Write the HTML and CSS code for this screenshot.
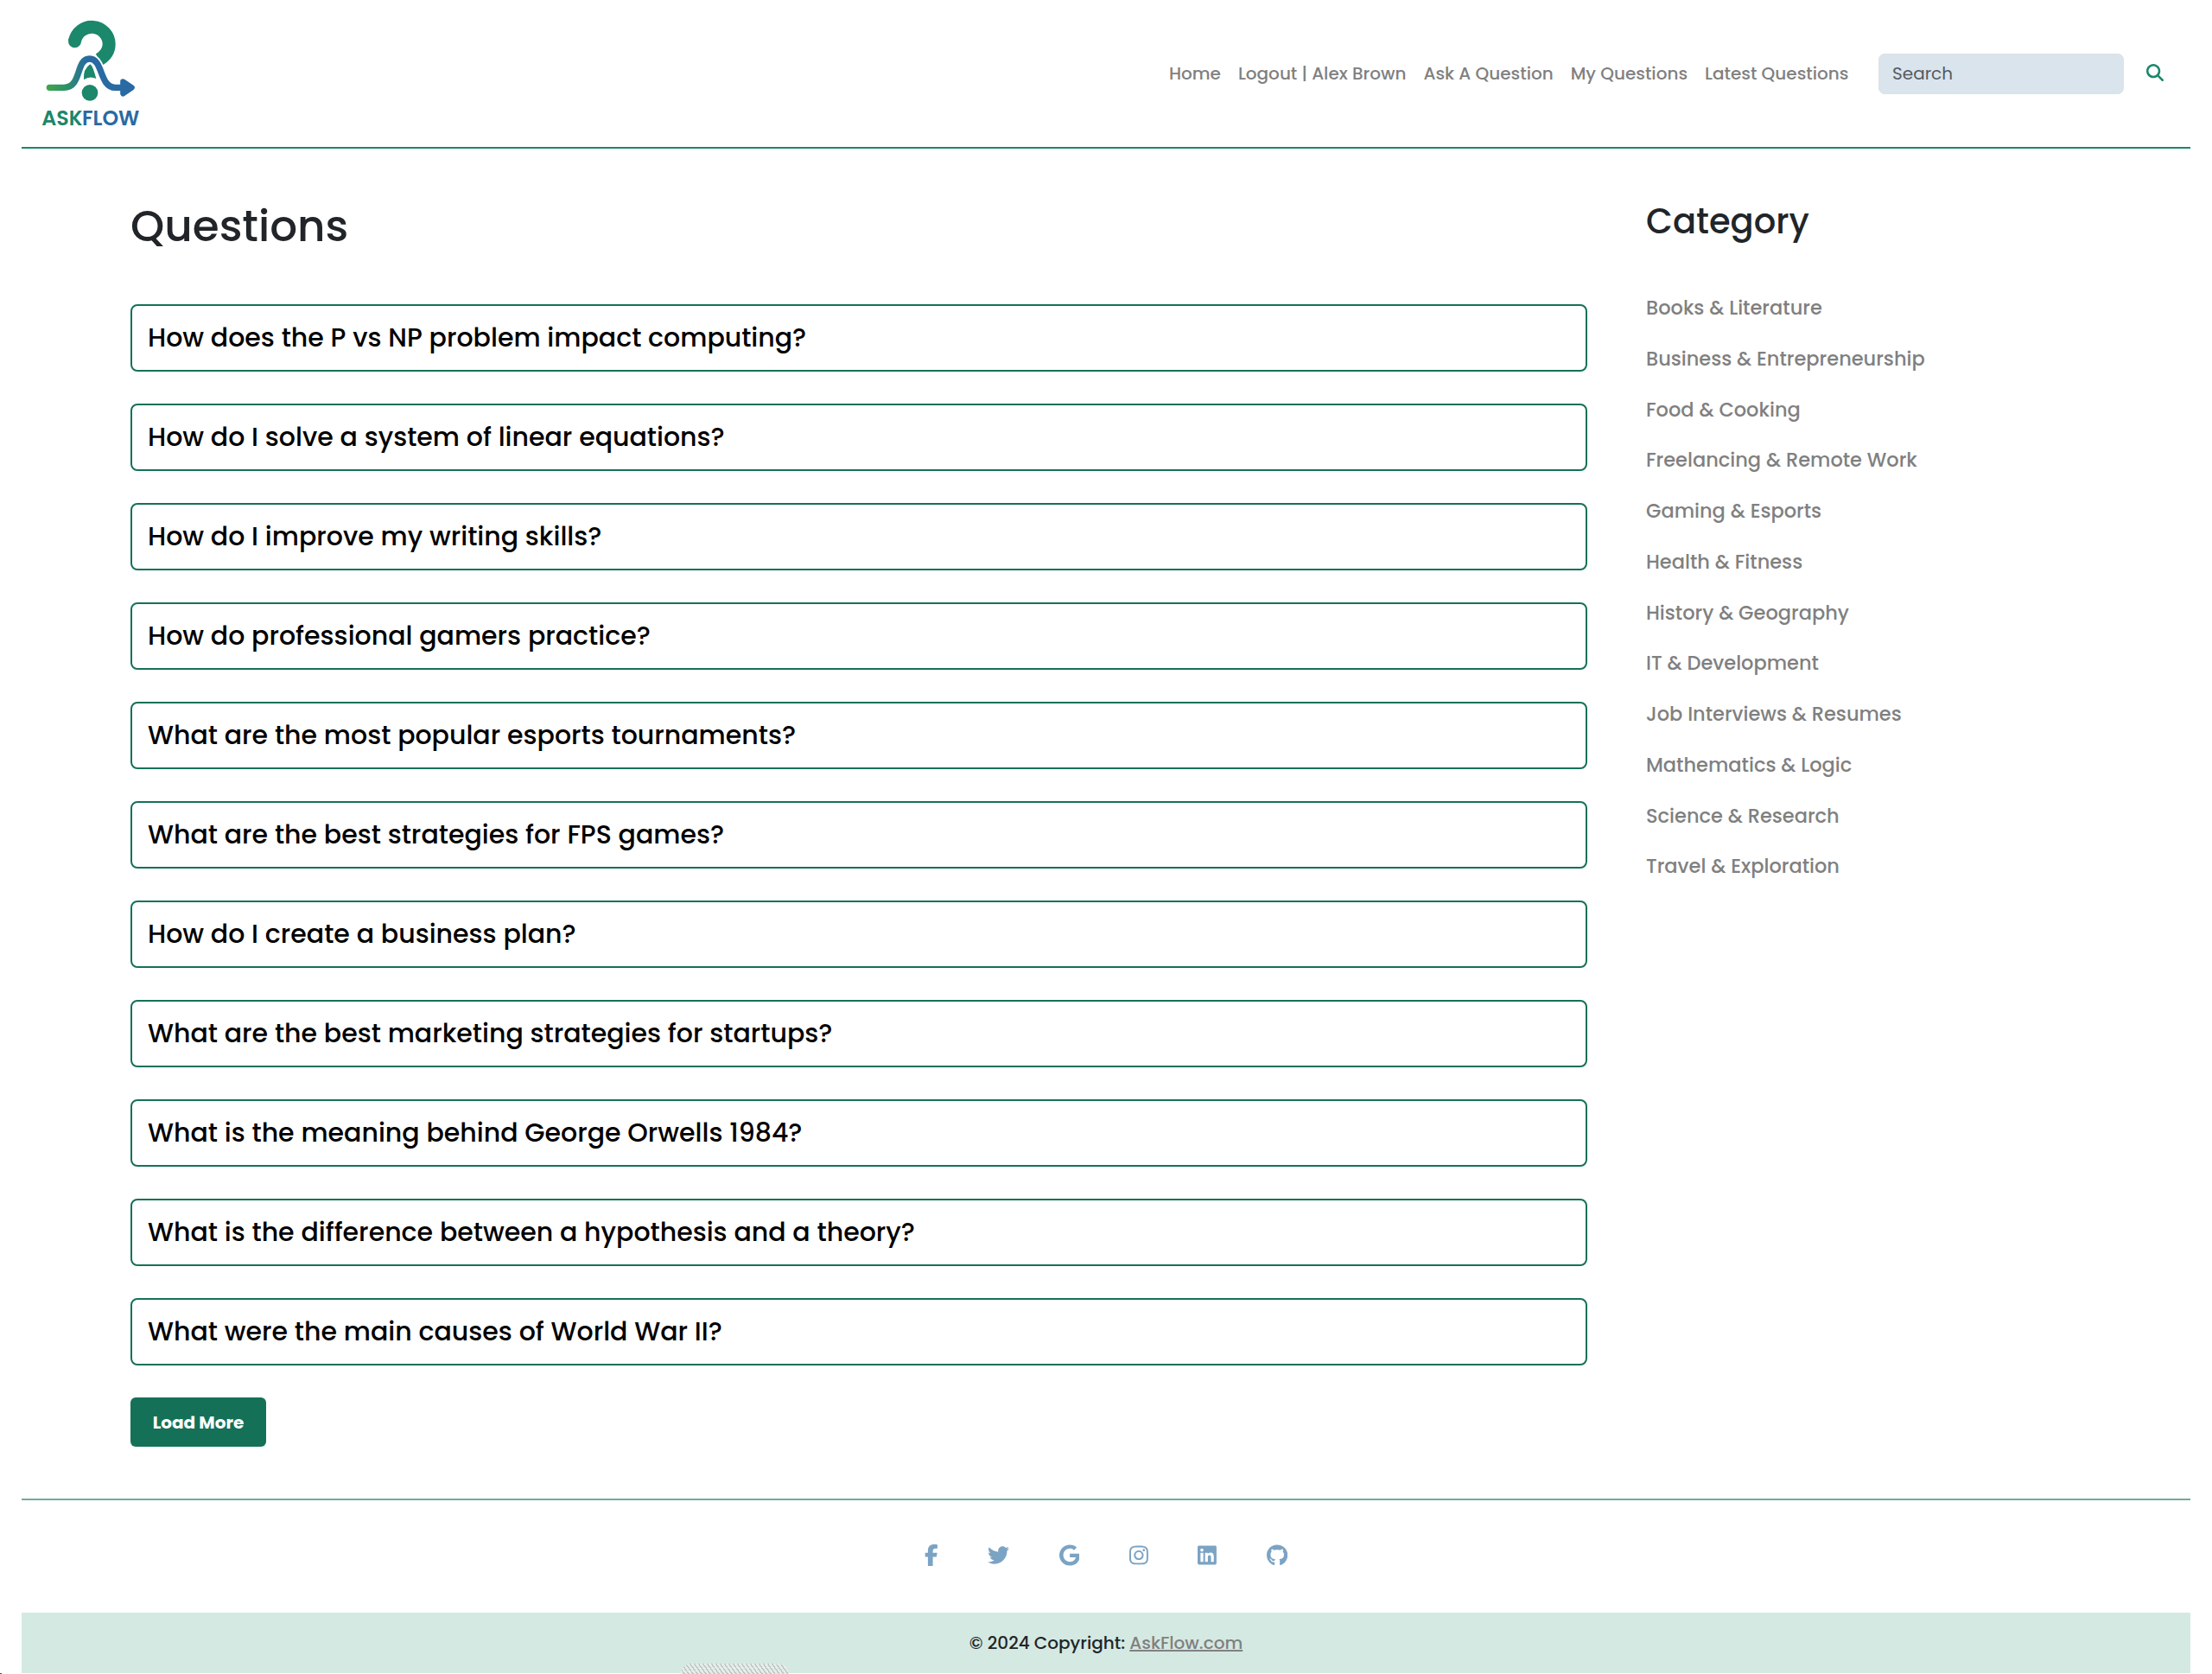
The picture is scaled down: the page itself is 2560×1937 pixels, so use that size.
FILE: index.html
```html
<!DOCTYPE html>
<html lang="en">
<head>
<meta charset="utf-8">
<title>AskFlow</title>
<link rel="stylesheet" href="styles.css">
</head>
<body>
<div class="page">
  <header class="header">
    <a class="logo" href="#" aria-label="AskFlow">
      <svg viewBox="120 45 390 420" width="130" height="140">
        <defs>
          <linearGradient id="flow" gradientUnits="userSpaceOnUse" x1="165" y1="0" x2="300" y2="0">
            <stop offset="0" stop-color="#3fa54d"/>
            <stop offset=".5" stop-color="#2c9068"/>
            <stop offset="1" stop-color="#2a6aa3"/>
          </linearGradient>
        </defs>
        <path d="M259.500 143A60 60 0 0 1 378.500 153C378.500 175 366 194 344 207" fill="none" stroke="#1b876b" stroke-width="45"/>
        <circle cx="259.500" cy="143" r="22.500" fill="#1b876b"/>
        <path d="M172 304H222C285 304 262 204 311 204C358 204 345 304 400 304H430" fill="none" stroke="#fff" stroke-width="33"/>
        <path d="M313 223C321 229 326 244 334 273Q313 262 291 276Q288 240 313 223Z" fill="#1b876b"/>
        <circle cx="312" cy="322" r="28" fill="#1b876b"/>
        <path d="M172 304H222C285 304 262 204 311 204C358 204 345 304 400 304H430" fill="none" stroke="url(#flow)" stroke-width="22" stroke-linecap="round"/>
        <path d="M427 283L458 304L427 325Z" fill="#2a6aa3" stroke="#2a6aa3" stroke-width="19" stroke-linejoin="round"/>
        <text class="logo-text" x="145" y="435" textLength="142" lengthAdjust="spacingAndGlyphs" fill="#1b876b">ASK</text>
        <text class="logo-text" x="285" y="435" textLength="199" lengthAdjust="spacingAndGlyphs" fill="#2a6aa3">FLOW</text>
      </svg>
    </a>
    <nav class="nav">
      <a href="#">Home</a>
      <a href="#">Logout | Alex Brown</a>
      <a href="#">Ask A Question</a>
      <a href="#">My Questions</a>
      <a href="#">Latest Questions</a>
    </nav>
    <form class="search">
      <input type="text" placeholder="Search">
      <button type="button" aria-label="Search">
        <svg viewBox="0 0 512 512" width="20" height="20"><path d="M416 208c0 45.900-14.900 88.300-40 122.700L502.600 457.400c12.500 12.500 12.500 32.800 0 45.300s-32.800 12.500-45.300 0L330.700 376c-34.400 25.200-76.800 40-122.700 40C93.100 416 0 322.900 0 208S93.100 0 208 0S416 93.100 416 208zM208 352a144 144 0 1 0 0-288 144 144 0 1 0 0 288z"/></svg>
      </button>
    </form>
  </header>

  <main class="main">
    <section class="questions">
      <h1>Questions</h1>
      <div class="question-list">
        <a href="#">How does the P vs NP problem impact computing?</a>
        <a href="#">How do I solve a system of linear equations?</a>
        <a href="#">How do I improve my writing skills?</a>
        <a href="#">How do professional gamers practice?</a>
        <a href="#">What are the most popular esports tournaments?</a>
        <a href="#">What are the best strategies for FPS games?</a>
        <a href="#">How do I create a business plan?</a>
        <a href="#">What are the best marketing strategies for startups?</a>
        <a href="#">What is the meaning behind George Orwells 1984?</a>
        <a href="#">What is the difference between a hypothesis and a theory?</a>
        <a href="#">What were the main causes of World War II?</a>
      </div>
      <button class="load-more" type="button">Load More</button>
    </section>
    <aside class="categories">
      <h2>Category</h2>
      <div class="category-list">
        <a href="#">Books &amp; Literature</a>
        <a href="#">Business &amp; Entrepreneurship</a>
        <a href="#">Food &amp; Cooking</a>
        <a href="#">Freelancing &amp; Remote Work</a>
        <a href="#">Gaming &amp; Esports</a>
        <a href="#">Health &amp; Fitness</a>
        <a href="#">History &amp; Geography</a>
        <a href="#">IT &amp; Development</a>
        <a href="#">Job Interviews &amp; Resumes</a>
        <a href="#">Mathematics &amp; Logic</a>
        <a href="#">Science &amp; Research</a>
        <a href="#">Travel &amp; Exploration</a>
      </div>
    </aside>
  </main>

  <footer class="footer">
    <div class="social">
      <svg viewBox="0 0 320 512"><path d="M80 299.300V512H196V299.300h86.500l18-97.800H196V166.900c0-51.700 20.300-71.500 72.700-71.500c16.300 0 29.400 .4 37 1.200V7.900C291.400 4 256.400 0 236.200 0C129.300 0 80 50.500 80 159.400v42.100H14v97.800H80z"/></svg>
      <svg viewBox="0 0 512 512"><path d="M459.370 151.716c.325 4.548.325 9.097.325 13.645 0 138.720-105.583 298.558-298.558 298.558-59.452 0-114.680-17.219-161.137-47.106 8.447.974 16.568 1.299 25.340 1.299 49.055 0 94.213-16.568 130.274-44.832-46.132-.975-84.792-31.188-98.112-72.772 6.498.974 12.995 1.624 19.818 1.624 9.421 0 18.843-1.300 27.614-3.573-48.081-9.747-84.143-51.980-84.143-102.985v-1.299c13.969 7.797 30.214 12.670 47.431 13.319-28.264-18.843-46.781-51.005-46.781-87.391 0-19.492 5.197-37.360 14.294-52.954 51.655 63.675 129.300 105.258 216.365 109.807-1.624-7.797-2.599-15.918-2.599-24.040 0-57.828 46.782-104.934 104.934-104.934 30.213 0 57.502 12.670 76.670 33.137 23.715-4.548 46.456-13.320 66.599-25.340-7.798 24.366-24.366 44.833-46.132 57.827 21.117-2.273 41.584-8.122 60.426-16.243-14.292 20.791-32.161 39.308-52.628 54.253z"/></svg>
      <svg viewBox="0 0 488 512"><path d="M488 261.800C488 403.300 391.100 504 248 504 110.800 504 0 393.200 0 256S110.800 8 248 8c66.800 0 123 24.500 166.300 64.900l-67.500 64.900C258.500 52.600 94.300 116.600 94.300 256c0 86.500 69.100 156.600 153.700 156.600 98.200 0 135-70.400 140.800-106.900H248v-85.300h236.100c2.300 12.700 3.900 24.900 3.900 41.400z"/></svg>
      <svg viewBox="0 0 448 512"><path d="M224.100 141c-63.600 0-114.900 51.300-114.900 114.900s51.300 114.900 114.900 114.900S339 319.500 339 255.900 287.700 141 224.100 141zm0 189.600c-41.100 0-74.700-33.500-74.700-74.700s33.500-74.700 74.700-74.700 74.700 33.500 74.700 74.700-33.600 74.700-74.700 74.700zm146.400-194.300c0 14.900-12 26.800-26.800 26.800-14.900 0-26.800-12-26.800-26.800s12-26.800 26.800-26.800 26.800 12 26.800 26.800zm76.100 27.200c-1.700-35.900-9.900-67.700-36.200-93.900-26.200-26.200-58-34.400-93.900-36.200-37-2.100-147.900-2.100-184.900 0-35.800 1.700-67.600 9.900-93.900 36.100s-34.400 58-36.200 93.900c-2.100 37-2.100 147.900 0 184.900 1.700 35.900 9.900 67.700 36.200 93.900s58 34.400 93.900 36.200c37 2.100 147.900 2.100 184.900 0 35.900-1.700 67.700-9.900 93.900-36.200 26.200-26.200 34.400-58 36.200-93.900 2.100-37 2.100-147.800 0-184.800zM398.800 388c-7.800 19.600-22.900 34.700-42.600 42.600-29.500 11.700-99.500 9-132.100 9s-102.700 2.600-132.100-9c-19.600-7.800-34.700-22.900-42.600-42.600-11.700-29.500-9-99.500-9-132.100s-2.600-102.700 9-132.100c7.800-19.600 22.900-34.700 42.600-42.600 29.500-11.700 99.500-9 132.100-9s102.700-2.600 132.100 9c19.600 7.800 34.700 22.900 42.600 42.600 11.700 29.500 9 99.500 9 132.100s2.700 102.700-9 132.100z"/></svg>
      <svg viewBox="0 0 448 512"><path d="M416 32H31.900C14.300 32 0 46.500 0 64.300v383.400C0 465.500 14.300 480 31.900 480H416c17.600 0 32-14.500 32-32.300V64.300c0-17.800-14.400-32.300-32-32.300zM135.400 416H69V202.200h66.500V416zm-33.200-243c-21.300 0-38.500-17.300-38.500-38.500S80.900 96 102.200 96c21.200 0 38.500 17.300 38.500 38.500 0 21.300-17.200 38.500-38.500 38.500zm282.100 243h-66.400V312c0-24.800-.5-56.700-34.500-56.700-34.600 0-39.900 27-39.900 54.900V416h-66.400V202.200h63.700v29.200h.9c8.900-16.800 30.600-34.500 62.900-34.500 67.200 0 79.700 44.300 79.700 101.900V416z"/></svg>
      <svg viewBox="0 0 496 512"><path d="M165.900 397.400c0 2-2.300 3.600-5.200 3.600-3.300.3-5.600-1.300-5.600-3.600 0-2 2.300-3.600 5.200-3.600 3-.3 5.600 1.300 5.600 3.600zm-31.100-4.500c-.7 2 1.300 4.300 4.300 4.900 2.600 1 5.600 0 6.200-2s-1.300-4.300-4.300-5.200c-2.600-.7-5.500.3-6.200 2.300zm44.200-1.700c-2.900.7-4.900 2.600-4.600 4.900.3 2 2.900 3.300 5.900 2.600 2.900-.7 4.900-2.600 4.600-4.600-.3-1.900-3-3.200-5.900-2.900zM244.800 8C106.100 8 0 113.300 0 252c0 110.900 69.800 205.800 169.500 239.200 12.800 2.300 17.300-5.600 17.300-12.100 0-6.200-.3-40.400-.3-61.400 0 0-70 15-84.700-29.800 0 0-11.400-29.100-27.800-36.600 0 0-22.900-15.700 1.600-15.400 0 0 24.900 2 38.600 25.800 21.900 38.600 58.600 27.500 72.900 20.900 2.300-16 8.800-27.100 16-33.700-55.900-6.200-112.300-14.300-112.300-110.500 0-27.500 7.600-41.300 23.600-58.900-2.600-6.500-11.100-33.300 2.600-67.900 20.900-6.500 69 27 69 27 20-5.600 41.500-8.500 62.800-8.500s42.800 2.900 62.800 8.500c0 0 48.100-33.600 69-27 13.700 34.700 5.200 61.400 2.600 67.900 16 17.700 25.800 31.500 25.800 58.900 0 96.500-58.900 104.200-114.800 110.500 9.200 7.900 17 22.900 17 46.400 0 33.700-.3 75.400-.3 83.600 0 6.500 4.600 14.400 17.300 12.100C428.200 457.800 496 362.900 496 252 496 113.300 383.500 8 244.800 8z"/></svg>
    </div>
    <div class="copyright">© 2024 Copyright: <a href="#">AskFlow.com</a></div>
  </footer>
</div>
<div class="status-tab"></div>
<div class="corner-mark"></div>
</body>
</html>
```
FILE: styles.css
```css
* { box-sizing: border-box; }

body {
  position: relative;
  margin: 0;
  height: 1937px;
  overflow: hidden;
  background: #fff;
  color: #212529;
  font: 500 20px/30px Poppins, Inter, sans-serif;
}

a { color: gray; text-decoration: none; }
h1, h2 { margin: 0; font-weight: 500; line-height: 1.2; }
button { font: inherit; border: 0; padding: 0; background: none; }
svg { display: block; }

.page { padding: 0 25px; }

/* Header */
.header {
  display: flex;
  align-items: center;
  height: 172px;
  padding: 0 31px 0 15px;
  border-bottom: 2px solid #1b876b;
}
.logo-text { font: 600 73px Poppins, Inter, sans-serif; }
.nav { display: flex; gap: 20px; margin-left: auto; }
.search { display: flex; align-items: center; gap: 26px; margin-left: 34.5px; }
.search input {
  width: 284px;
  height: 47px;
  padding: 0 15px;
  border: 1px solid #dee2e6;
  border-radius: 7px;
  background: #d9e4ed;
  font: 400 20px/30px Poppins, Inter, sans-serif;
}
.search input::placeholder { color: #555a60; opacity: 1; }
.search button { fill: #1b876b; margin-top: -2px; }

/* Content */
.main {
  display: grid;
  grid-template-columns: 1686px 1fr;
  column-gap: 68px;
  height: 1562px;
  padding: 60px 0 0 126px;
}
.questions h1 { font-size: 50px; margin-bottom: 60px; }
.question-list { display: flex; flex-direction: column; gap: 37px; }
.question-list a {
  display: flex;
  align-items: center;
  height: 78px;
  padding-left: 18px;
  border: 2px solid #147158;
  border-radius: 8px;
  color: #000;
  font-size: 30px;
}
.load-more {
  width: 157px;
  height: 57px;
  margin-top: 37px;
  border-radius: 6px;
  background: #147158;
  color: #fff;
  font-weight: 700;
}
.categories h2 { font-size: 40px; margin-bottom: 60px; }
.category-list {
  display: flex;
  flex-direction: column;
  gap: 25px;
  font-size: 22.5px;
  line-height: 33.75px;
}

/* Footer */
.footer { border-top: 2px solid #70ab9b; }
.social {
  display: flex;
  justify-content: center;
  align-items: center;
  gap: 57.5px;
  height: 130px;
  padding-bottom: 3px;
  fill: #7ba3c4;
}
.social svg { height: 25px; }
.copyright {
  height: 70px;
  background: #d4e9e1;
  line-height: 70px;
  text-align: center;
}
.copyright a { text-decoration: underline; }

/* Overlays at the window's bottom edge */
.status-tab {
  position: absolute;
  left: 788px;
  bottom: 0;
  width: 125px;
  height: 12px;
  border-radius: 12px 12px 0 0;
  background: repeating-linear-gradient(54deg, #e4edea 0 2.7px, #bcc5c2 2.7px 4.04px);
}
.corner-mark {
  position: absolute;
  left: 0;
  bottom: 0;
  width: 2px;
  height: 1px;
  background: #f00;
}
```
